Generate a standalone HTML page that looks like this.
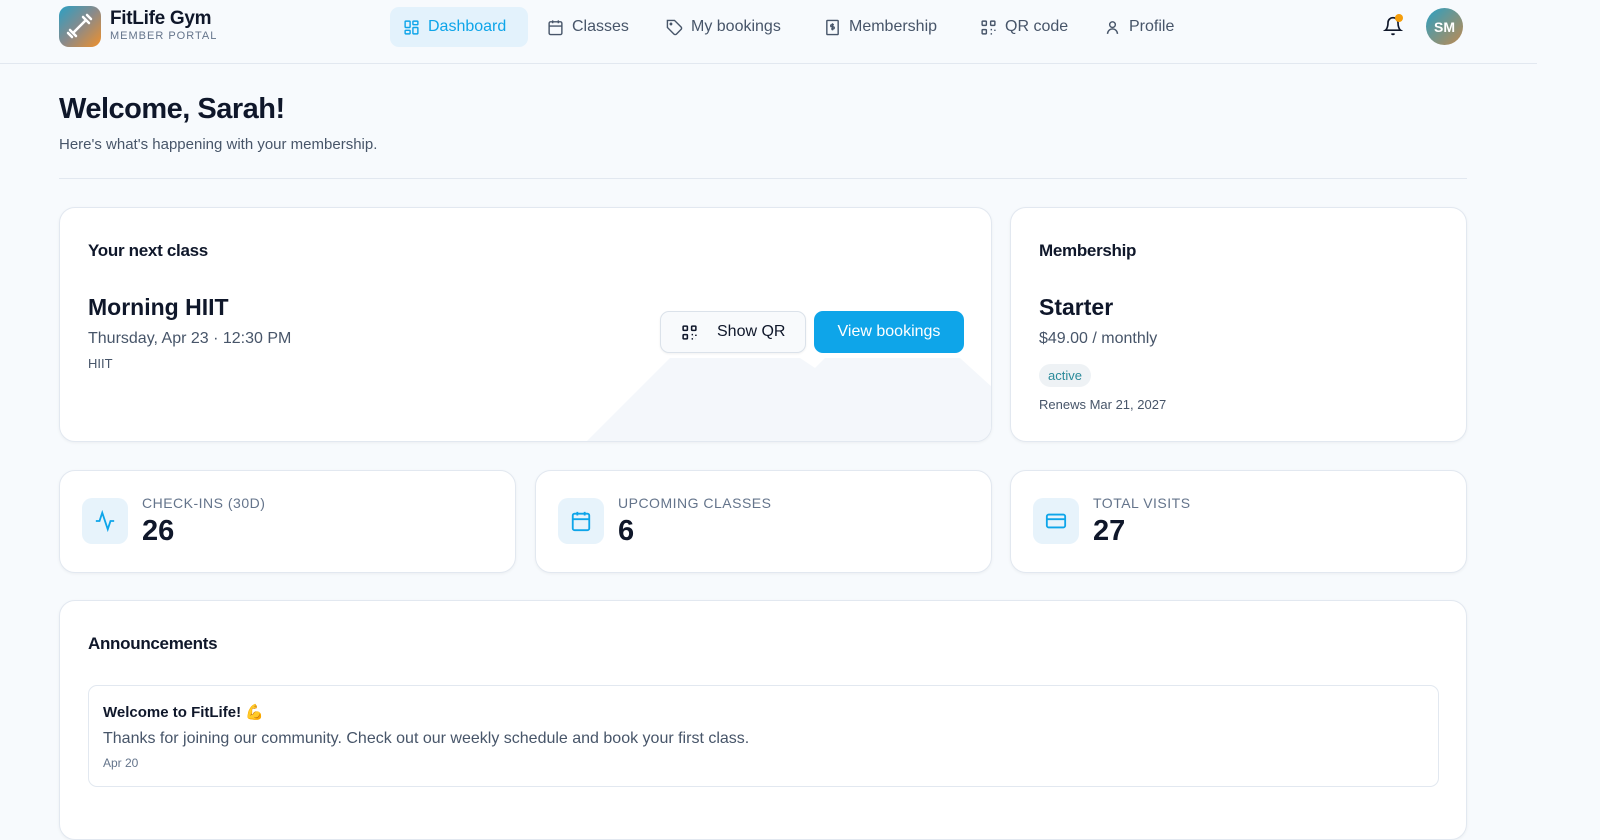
<!DOCTYPE html>
<html><head><meta charset="utf-8"><style>
*{box-sizing:border-box;margin:0;padding:0}
body{width:1600px;height:816px;overflow:hidden;background:#f7fafd;font-family:"Liberation Sans",sans-serif;color:#0f172a;position:relative}
.hdr{position:absolute;left:0;top:0;width:1537px;height:64px;border-bottom:1px solid #e2e8f0;background:#f7fafd}
.logo{position:absolute;left:59px;top:6px;width:42px;height:41px;border-radius:10px;background:linear-gradient(135deg,#2aa0c4,#8a8a8a 50%,#f0902a)}
.brand{position:absolute;left:110px;top:8px;font-weight:bold;font-size:19px;letter-spacing:-0.3px}
.sub{position:absolute;left:110px;top:30px;font-size:11px;color:#64748b;letter-spacing:1px}
.nav{position:absolute;top:7px;height:40px;display:flex;align-items:center;font-size:16px;color:#475569;gap:8px}
.nav svg{width:17px;height:17px}
.act{left:390px;width:138px;background:#e3f2fc;border-radius:9px;color:#0ea5e9;padding-left:13px}
.card{position:absolute;background:#fff;border:1px solid #e2e8f0;border-radius:16px;box-shadow:0 1px 3px rgba(0,0,0,.05);overflow:hidden}
h1{position:absolute;left:59px;top:93px;font-size:29px;letter-spacing:-0.5px}
.t{position:absolute;white-space:nowrap}
.ico{position:absolute;left:22px;top:27px;width:46px;height:46px;border-radius:10px;background:#e7f3fb;display:flex;align-items:center;justify-content:center}
.lbl{position:absolute;left:82px;top:24px;font-size:14px;color:#64748b;letter-spacing:.5px}
.num{position:absolute;left:82px;top:44px;font-size:29px;font-weight:bold}
</style></head><body>
<div class="hdr"></div>
<div class="logo"><svg width="42" height="41" viewBox="0 0 42 41"><g stroke="#fff" stroke-width="2.5" fill="none" stroke-linecap="round"><path d="M14 27l13-13M11 24l6 6M9 27l4 4M24 11l6 6M28 9l4 4"/></g></svg></div>
<div class="brand">FitLife Gym</div><div class="sub">MEMBER PORTAL</div>
<div class="nav act"><svg viewBox="0 0 24 24" fill="none" stroke="#0ea5e9" stroke-width="2"><rect x="3" y="3" width="7" height="9" rx="1"/><rect x="14" y="3" width="7" height="5" rx="1"/><rect x="14" y="12" width="7" height="9" rx="1"/><rect x="3" y="16" width="7" height="5" rx="1"/></svg>Dashboard</div>
<div class="nav" style="left:547px"><svg viewBox="0 0 24 24" fill="none" stroke="#475569" stroke-width="2"><rect x="3" y="4" width="18" height="18" rx="2"/><path d="M16 2v4M8 2v4M3 10h18"/></svg>Classes</div>
<div class="nav" style="left:666px"><svg viewBox="0 0 24 24" fill="none" stroke="#475569" stroke-width="2"><path d="M12 2H2v10l9.3 9.3a2.4 2.4 0 003.4 0l6.6-6.6a2.4 2.4 0 000-3.4z"/><circle cx="7" cy="7" r="1"/></svg>My bookings</div>
<div class="nav" style="left:824px"><svg viewBox="0 0 24 24" fill="none" stroke="#475569" stroke-width="2"><rect x="4" y="2" width="16" height="20" rx="1"/><path d="M14 8h-3a1.5 1.5 0 000 3h2a1.5 1.5 0 010 3h-3M12 6v10"/></svg>Membership</div>
<div class="nav" style="left:980px"><svg viewBox="0 0 24 24" fill="none" stroke="#475569" stroke-width="2"><rect x="3" y="3" width="6" height="6" rx="1"/><rect x="15" y="3" width="6" height="6" rx="1"/><rect x="3" y="15" width="6" height="6" rx="1"/><path d="M15 15h2M21 15v2M15 21h2M21 21v0M18 18h0"/></svg>QR code</div>
<div class="nav" style="left:1104px"><svg viewBox="0 0 24 24" fill="none" stroke="#475569" stroke-width="2"><circle cx="12" cy="8" r="4"/><path d="M5 21a7 7 0 0114 0"/></svg>Profile</div>
<svg style="position:absolute;left:1383px;top:16px" width="20" height="20" viewBox="0 0 24 24" fill="none" stroke="#0f172a" stroke-width="2"><path d="M6 8a6 6 0 0112 0c0 7 3 9 3 9H3s3-2 3-9M10.3 21a1.9 1.9 0 003.4 0"/></svg>
<div style="position:absolute;left:1395px;top:14px;width:8px;height:8px;border-radius:50%;background:#f59e0b"></div>
<div style="position:absolute;left:1426px;top:8px;width:37px;height:37px;border-radius:50%;background:linear-gradient(135deg,#2aa0c4,#c08a50);color:#fff;font-weight:bold;font-size:14px;display:flex;align-items:center;justify-content:center">SM</div>

<h1>Welcome, Sarah!</h1>
<div class="t" style="left:59px;top:136px;font-size:15px;color:#475569">Here's what's happening with your membership.</div>
<div style="position:absolute;left:59px;top:178px;width:1408px;height:1px;background:#e2e8f0"></div>

<div class="card" style="left:59px;top:207px;width:933px;height:235px">
<svg style="position:absolute;left:0;top:0" width="933" height="235"><polygon points="525,235 610,150 740,150 755,160 765,150 900,150 933,180 933,235" fill="#f4f7fb"/></svg>
<div class="t" style="left:28px;top:33px;font-size:17px;font-weight:bold;letter-spacing:-.3px">Your next class</div>
<div class="t" style="left:28px;top:86px;font-size:23px;font-weight:bold">Morning HIIT</div>
<div class="t" style="left:28px;top:122px;font-size:16px;color:#475569">Thursday, Apr 23 · 12:30 PM</div>
<div class="t" style="left:28px;top:148px;font-size:13px;color:#475569">HIIT</div>
<div style="position:absolute;left:600px;top:103px;width:146px;height:42px;border:1px solid #dbe2ea;border-radius:9px;background:#f8fafc;box-shadow:0 1px 2px rgba(0,0,0,.06);font-size:16px;display:flex;align-items:center;padding-left:20px"><svg width="17" height="17" viewBox="0 0 24 24" fill="none" stroke="#0f172a" stroke-width="2.2"><rect x="3" y="3" width="6" height="6" rx="1"/><rect x="15" y="3" width="6" height="6" rx="1"/><rect x="3" y="15" width="6" height="6" rx="1"/><path d="M15 15h2M21 15v2M15 21h2M18 18h.1M21 21h.1"/></svg><span style="margin-left:19px">Show QR</span></div>
<div style="position:absolute;left:754px;top:103px;width:150px;height:42px;border-radius:9px;background:#0ea5e9;color:#fff;font-size:16px;display:flex;align-items:center;justify-content:center">View bookings</div>
</div>

<div class="card" style="left:1010px;top:207px;width:457px;height:235px">
<div class="t" style="left:28px;top:33px;font-size:17px;font-weight:bold;letter-spacing:-.3px">Membership</div>
<div class="t" style="left:28px;top:86px;font-size:23px;font-weight:bold">Starter</div>
<div class="t" style="left:28px;top:122px;font-size:16px;color:#475569">$49.00 / monthly</div>
<div class="t" style="left:28px;top:156px;height:23px;padding:0 9px;border-radius:12px;background:#eef2f5;font-size:13px;color:#2a8a9a;line-height:23px">active</div>
<div class="t" style="left:28px;top:189px;font-size:13px;color:#475569">Renews Mar 21, 2027</div>
</div>

<div class="card" style="left:59px;top:470px;width:457px;height:103px"><div class="ico"><svg width="22" height="22" viewBox="0 0 24 24" fill="none" stroke="#0ea5e9" stroke-width="2"><path d="M22 12h-4l-3 9L9 3l-3 9H2"/></svg></div><div class="lbl">CHECK-INS (30D)</div><div class="num">26</div></div>
<div class="card" style="left:535px;top:470px;width:457px;height:103px"><div class="ico"><svg width="22" height="22" viewBox="0 0 24 24" fill="none" stroke="#0ea5e9" stroke-width="2"><rect x="3" y="4" width="18" height="18" rx="2"/><path d="M16 2v4M8 2v4M3 10h18"/></svg></div><div class="lbl">UPCOMING CLASSES</div><div class="num">6</div></div>
<div class="card" style="left:1010px;top:470px;width:457px;height:103px"><div class="ico"><svg width="24" height="22" viewBox="0 0 24 24" fill="none" stroke="#0ea5e9" stroke-width="2"><rect x="2" y="5" width="20" height="14" rx="2"/><path d="M2 10h20"/></svg></div><div class="lbl">TOTAL VISITS</div><div class="num">27</div></div>

<div class="card" style="left:59px;top:600px;width:1408px;height:240px">
<div class="t" style="left:28px;top:33px;font-size:17px;font-weight:bold;letter-spacing:-.3px">Announcements</div>
<div style="position:absolute;left:28px;top:84px;width:1351px;height:102px;border:1px solid #e2e8f0;border-radius:9px">
<div class="t" style="left:14px;top:17px;font-size:15px;font-weight:bold">Welcome to FitLife! 💪</div>
<div class="t" style="left:14px;top:44px;font-size:16px;color:#475569">Thanks for joining our community. Check out our weekly schedule and book your first class.</div>
<div class="t" style="left:14px;top:70px;font-size:12px;color:#64748b">Apr 20</div>
</div></div>
</body></html>
